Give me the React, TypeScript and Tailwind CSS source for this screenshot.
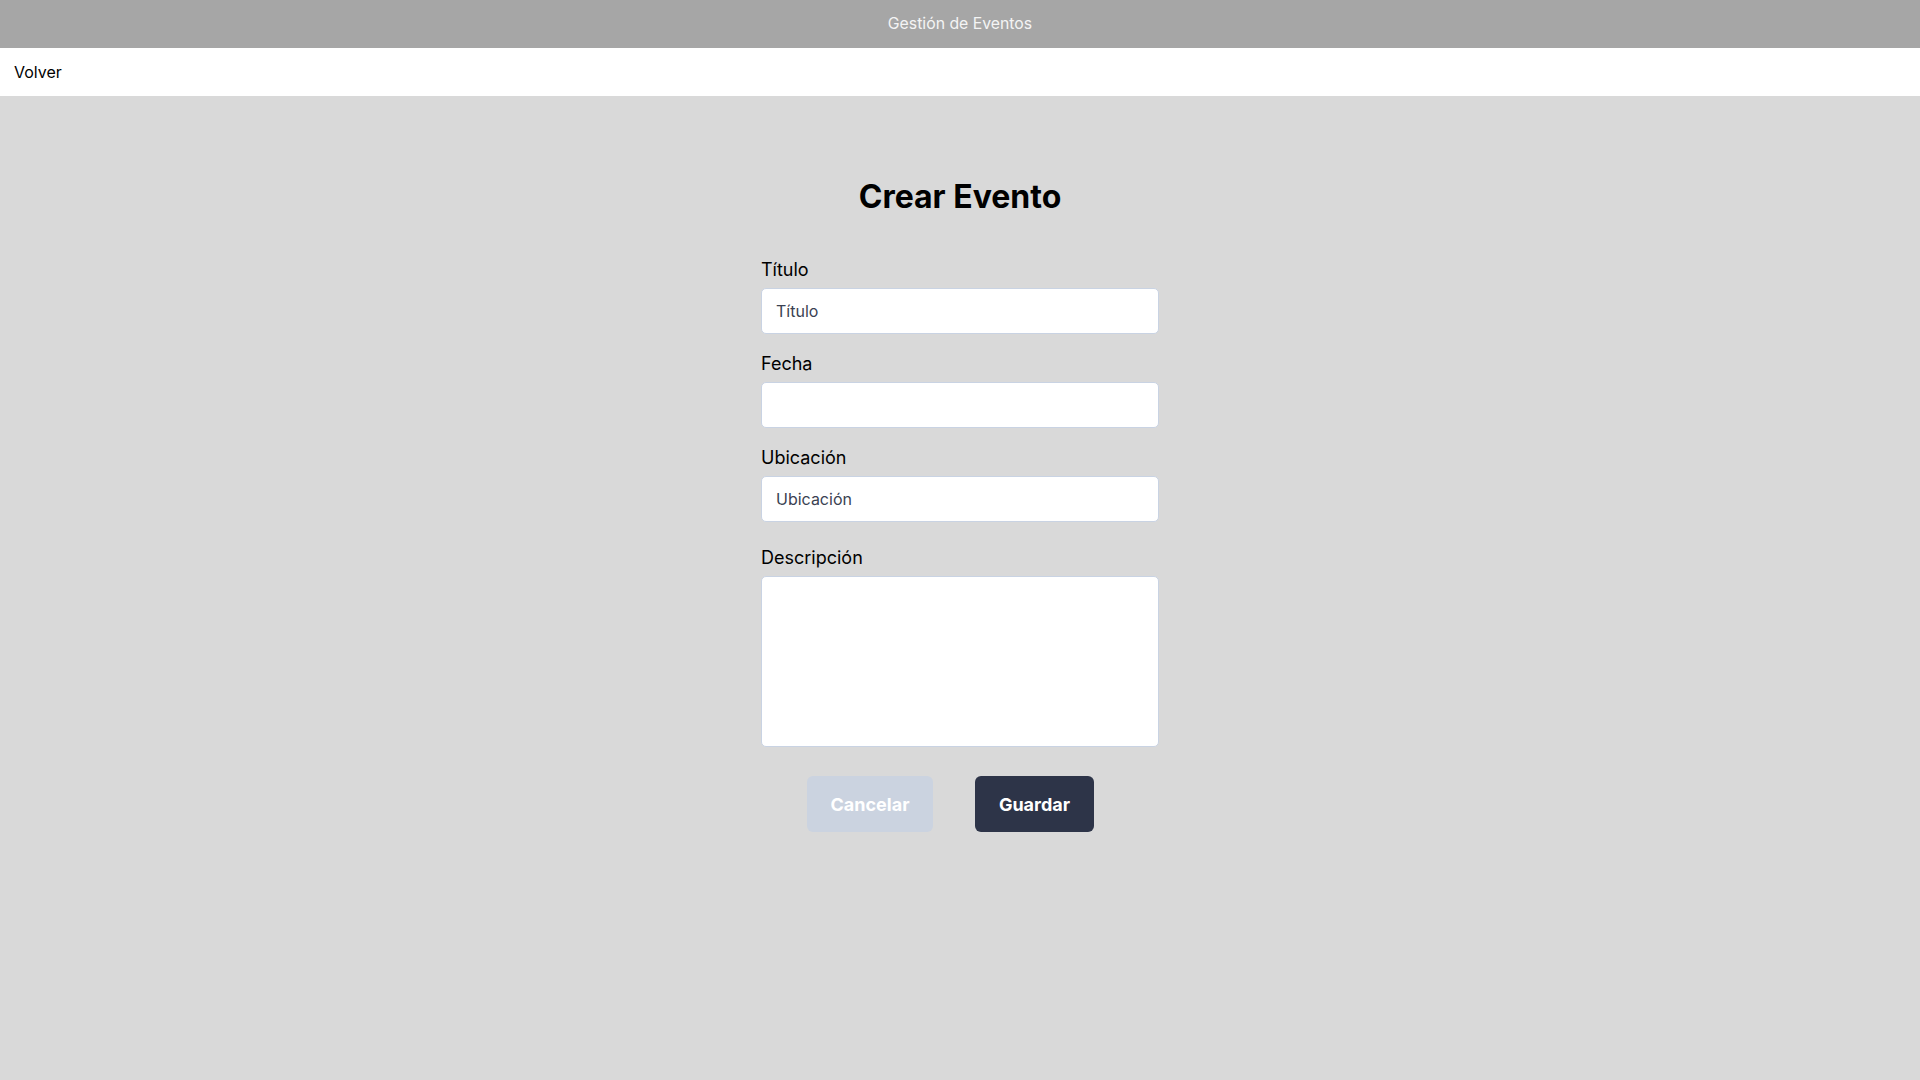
import { useState } from 'react';

const FONT = { fontFamily: 'Inter, "Noto Sans", sans-serif' };

type FieldProps = {
  label: string;
  placeholder?: string;
  value: string;
  onChange: (v: string) => void;
};

function Field({ label, placeholder, value, onChange }: FieldProps) {
  return (
    <div className="flex flex-col">
      <label className="mb-1 text-[18px] leading-7 text-black">{label}</label>
      <input
        value={value}
        placeholder={placeholder}
        onChange={(e) => onChange(e.target.value)}
        className="h-[46px] w-full rounded-[5px] border border-[#c9d3e3] bg-white px-[14px] text-[16px] text-[#2d3748] outline-none placeholder:text-[#3a4252]"
      />
    </div>
  );
}

export default function App() {
  const [titulo, setTitulo] = useState('');
  const [fecha, setFecha] = useState('');
  const [ubicacion, setUbicacion] = useState('');
  const [descripcion, setDescripcion] = useState('');

  return (
    <div className="min-h-screen bg-[#d9d9d9]" style={FONT}>
      <header className="flex h-12 items-center justify-center bg-[#a6a6a6]">
        <span className="text-[15.8px] text-[#f4f4f4]">Gestión de Eventos</span>
      </header>

      <nav className="flex h-12 items-center bg-white px-[14px]">
        <button className="text-[16px] text-black">Volver</button>
      </nav>

      <main className="flex flex-col items-center pt-[81px]">
        <h1 className="mb-[39px] text-[32px] font-bold leading-10 text-black">
          Crear Evento
        </h1>

        <form
          className="flex w-[398px] flex-col gap-4"
          onSubmit={(e) => e.preventDefault()}
        >
          <Field label="Título" placeholder="Título" value={titulo} onChange={setTitulo} />
          <Field label="Fecha" value={fecha} onChange={setFecha} />
          <Field
            label="Ubicación"
            placeholder="Ubicación"
            value={ubicacion}
            onChange={setUbicacion}
          />

          <div className="mt-[6px] flex flex-col">
            <label className="mb-1 text-[18px] leading-7 text-black">Descripción</label>
            <textarea
              value={descripcion}
              onChange={(e) => setDescripcion(e.target.value)}
              className="h-[171px] w-full resize-none rounded-[5px] border border-[#c9d3e3] bg-white px-[14px] py-2 text-[16px] text-[#2d3748] outline-none"
            />
          </div>

          <div className="mt-[13px] flex justify-center gap-[42px] pr-[19px]">
            <button
              type="button"
              className="h-14 w-[126px] rounded-md bg-[#cbd3e0] text-[18px] font-bold text-white"
            >
              Cancelar
            </button>
            <button
              type="submit"
              className="h-14 w-[119px] rounded-md bg-[#2d3448] text-[18px] font-bold text-white"
            >
              Guardar
            </button>
          </div>
        </form>
      </main>
    </div>
  );
}
